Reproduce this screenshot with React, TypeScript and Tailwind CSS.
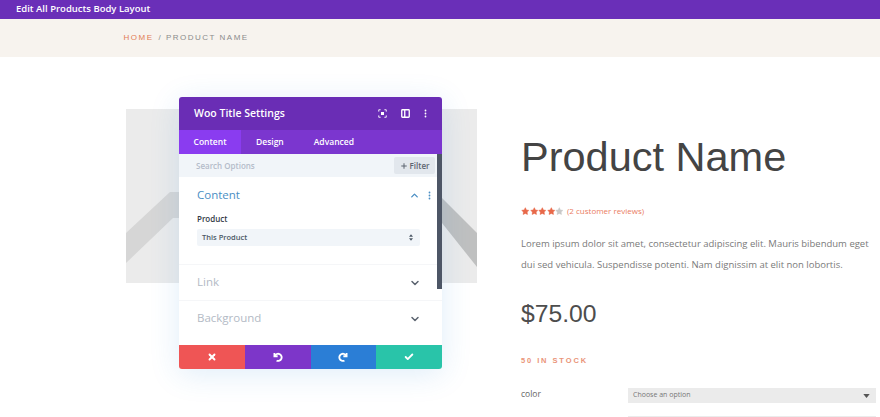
import { Check, ChevronDown, ChevronUp, Plus, Star, X } from "lucide-react";

const openSans = "font-['Open_Sans',sans-serif]";
const liberation = "font-['Liberation_Sans',Arial,sans-serif]";

function Dots({ className }: { className: string }) {
  return (
    <svg viewBox="0 0 4 12" className={className} fill="currentColor" aria-hidden>
      <circle cx="2" cy="2" r="1.2" />
      <circle cx="2" cy="6" r="1.2" />
      <circle cx="2" cy="10" r="1.2" />
    </svg>
  );
}

function Placeholder() {
  return (
    <svg viewBox="0 0 351 174" className="h-[174px] w-[351px] bg-[#ebebeb]" aria-hidden>
      <polygon points="0,124 44,83 60,83 60,109 47,109 0,154" fill="#d6d6d6" />
      <polygon points="316,89 351,124 351,158 316,114" fill="#bfc0c0" />
    </svg>
  );
}

function Section({ title }: { title: string }) {
  return (
    <div className="flex h-9 items-center justify-between border-b border-[#f5f6f8] pl-[18px] pr-[21px] last:border-b-0">
      <span className="pb-[2px] text-[11.5px] text-[#b3bac5]">{title}</span>
      <ChevronDown className="h-[12px] w-[12px] text-[#5c6470]" strokeWidth={3} aria-hidden />
    </div>
  );
}

function SettingsModal() {
  return (
    <div className={`absolute left-[179px] top-[97px] flex h-[272px] w-[263px] flex-col overflow-hidden rounded-[3px] bg-white shadow-[0_5px_30px_rgba(43,135,218,0.15)] ${openSans}`}>
      <div className="flex h-[33px] shrink-0 items-center justify-between bg-[#6a2db5] pl-[15px] pr-[15px]">
        <span className="text-[10.5px] font-semibold text-white">Woo Title Settings</span>
        <div className="flex items-center gap-[14px] text-white">
          <svg viewBox="0 0 12 12" className="h-[9px] w-[9px]" fill="none" stroke="currentColor" strokeWidth="1.2" aria-hidden>
            <path d="M1 3.5V1h2.5M8.5 1H11v2.5M11 8.5V11H8.5M3.5 11H1V8.5" />
            <rect x="4" y="4" width="4" height="4" fill="currentColor" stroke="none" />
          </svg>
          <svg viewBox="0 0 12 12" className="h-[9px] w-[9px]" fill="none" stroke="currentColor" strokeWidth="1.8" aria-hidden>
            <rect x="1" y="1" width="10" height="10" rx="1" />
            <path d="M5 1v10" />
          </svg>
          <Dots className="h-[9px] w-[3px]" />
        </div>
      </div>

      <div className="flex h-[24px] shrink-0 items-center bg-[#7b36cf] text-[8.5px] font-semibold text-white">
        <div className="flex h-full w-[62px] items-center justify-center bg-[#8a3cf0]">Content</div>
        <div className="ml-[15px]">Design</div>
        <div className="ml-[30px]">Advanced</div>
      </div>

      <div className="relative flex min-h-0 flex-1 flex-col">
        <div className="absolute bottom-[56px] right-0 top-0 w-[5px] bg-[#4d5666]" />
        <div className="flex h-[23px] shrink-0 items-center justify-between bg-[#f1f5f9] pl-[17px] pr-[7px]">
          <span className="text-[8px] font-semibold text-[#b4bcc9]">Search Options</span>
          <div className="flex h-[17px] w-[41px] items-center justify-center gap-[2px] rounded-[2px] bg-[#e2e7ed] text-[8px] font-semibold text-[#5c6470]">
            <Plus className="h-[8px] w-[8px]" strokeWidth={3} aria-hidden />
            Filter
          </div>
        </div>

        <div className="h-[88px] shrink-0 border-b border-[#f5f6f8] pl-[18px] pr-[11px] pt-[9px]">
          <div className="flex h-[18px] items-center justify-between">
            <span className="text-[11.5px] text-[#4b8fc4]">Content</span>
            <div className="flex items-center gap-[8px]">
              <ChevronUp className="h-[11px] w-[11px] text-[#4b8fc4]" strokeWidth={3} aria-hidden />
              <Dots className="h-[9px] w-[3px] text-[#4b8fc4]" />
            </div>
          </div>
          <div className="mt-[9px] text-[8px] font-semibold leading-[12px] text-[#323a46]">Product</div>
          <div className="mt-[4px] flex h-[17px] w-[223px] items-center justify-between rounded-[2px] bg-[#f1f5f9] pl-[5px] pr-[7px] text-[7.5px] font-semibold text-[#4c5866]">
            This Product
            <svg viewBox="0 0 6 10" className="h-[7px] w-[4px]" fill="#4c5866" aria-hidden>
              <path d="M3 0l3 4H0zM3 10L0 6h6z" />
            </svg>
          </div>
        </div>

        <Section title="Link" />
        <Section title="Background" />
      </div>

      <div className="flex h-[24px] shrink-0 text-white">
        <div className="flex flex-1 items-center justify-center bg-[#ef5555]">
          <X className="h-[10px] w-[10px]" strokeWidth={4.5} aria-hidden />
        </div>
        <div className="flex flex-1 items-center justify-center bg-[#7d36c9]">
          <svg viewBox="0 0 14 14" className="h-[10px] w-[10px]" fill="none" stroke="currentColor" strokeWidth="2.6" aria-hidden>
            <path d="M2 1.5v4.5h4.5" />
            <path d="M2.5 5.5A5 5 0 1 1 5 12" />
          </svg>
        </div>
        <div className="flex flex-1 items-center justify-center bg-[#2b7ed6]">
          <svg viewBox="0 0 14 14" className="h-[10px] w-[10px]" fill="none" stroke="currentColor" strokeWidth="2.6" aria-hidden>
            <path d="M12 1.5v4.5H7.5" />
            <path d="M11.5 5.5A5 5 0 1 0 9 12" />
          </svg>
        </div>
        <div className="flex flex-1 items-center justify-center bg-[#29c4a9]">
          <Check className="h-[10px] w-[10px]" strokeWidth={4.5} aria-hidden />
        </div>
      </div>
    </div>
  );
}

function VariationRow({ label }: { label: string }) {
  return (
    <div className="flex h-[28px] shrink-0 items-start">
      <span className={`w-[107px] text-[8.5px] leading-[12px] text-[#666] ${openSans}`}>{label}</span>
      <div className="flex h-[15px] w-[248px] items-center justify-between bg-[#ebebeb] pl-[5px] pr-[6px]">
        {label === "color" ? (
          <>
            <span className={`text-[7px] text-[#777] ${openSans}`}>Choose an option</span>
            <svg viewBox="0 0 8 5" className="h-[4px] w-[7px]" fill="#555" aria-hidden>
              <path d="M0 0h8L4 5z" />
            </svg>
          </>
        ) : null}
      </div>
    </div>
  );
}

export default function App() {
  return (
    <div className="relative h-[417px] w-[880px] overflow-hidden bg-white">
      <div className={`flex h-[19px] items-center bg-[#6a2fb8] pl-[16px] text-[9.5px] font-semibold text-white ${openSans}`}>
        Edit All Products Body Layout
      </div>
      <div className={`flex h-[38px] items-center bg-[#f7f3ee] pl-[123.5px] text-[8px] tracking-[1.5px] text-[#8b8b8b] ${liberation}`}>
        <span className="text-[#e27d55]">HOME</span>
        <span className="ml-[5px]">/ PRODUCT NAME</span>
      </div>

      <div className="flex pl-[126px] pt-[52px]">
        <Placeholder />
        <div className="ml-[44px] flex flex-col">
          <h1 className={`mt-[16px] text-[41.5px] font-normal leading-[64px] text-[#444] ${liberation}`}>Product Name</h1>
          <div className="mt-[16px] flex h-[12px] items-center">
            {[0, 1, 2, 3, 4].map((i) => (
              <Star
                key={i}
                className={i < 4 ? "h-[8.6px] w-[8.6px] text-[#e8694a]" : "h-[8.6px] w-[8.6px] text-[#c9c9c9]"}
                fill="currentColor"
                strokeWidth={1}
                aria-hidden
              />
            ))}
            <span className={`ml-[3px] text-[8px] text-[#ea7d5f] ${openSans}`}>(2 customer reviews)</span>
          </div>
          <p className={`mt-[16px] w-[352px] text-[9.5px] leading-[21px] text-[#7a7a7a] ${openSans}`}>
            Lorem ipsum dolor sit amet, consectetur adipiscing elit. Mauris bibendum eget dui sed vehicula. Suspendisse potenti. Nam dignissim at elit non lobortis.
          </p>
          <div className={`mt-[21px] text-[24.7px] leading-[36px] text-[#4d4d4d] ${liberation}`}>$75.00</div>
          <div className={`mt-[24px] text-[7.5px] font-bold leading-[10px] tracking-[1.9px] text-[#ea9478] ${liberation}`}>50 IN STOCK</div>
          <div className="mt-[22px] flex flex-col">
            <VariationRow label="color" />
            <VariationRow label="size" />
          </div>
        </div>
      </div>

      <SettingsModal />
    </div>
  );
}
